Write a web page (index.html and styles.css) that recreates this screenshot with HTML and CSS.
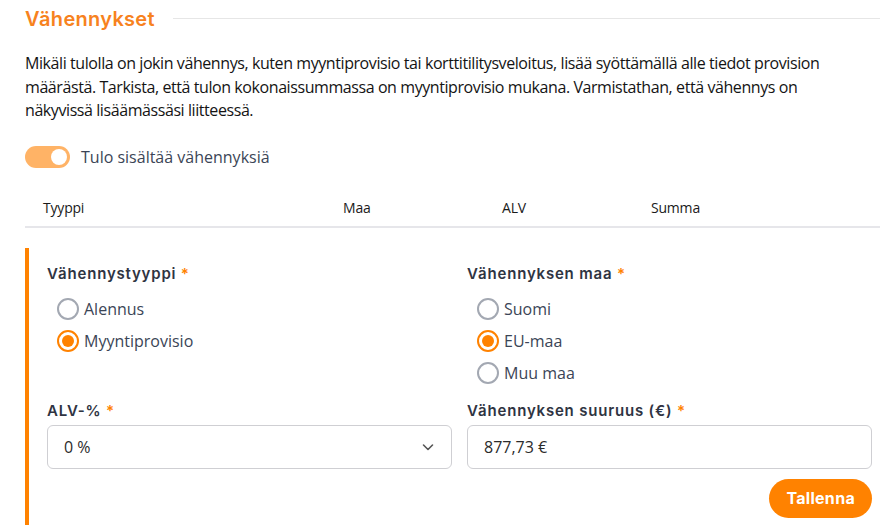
FILE: index.html
```html
<!DOCTYPE html>
<html lang="fi">
<head>
<meta charset="utf-8">
<link rel="stylesheet" href="styles.css">
</head>
<body>
<section class="deductions">
  <div class="title-row">
    <h2 class="title">Vähennykset</h2>
    <div class="title-line"></div>
  </div>
  <p class="intro">Mikäli tulolla on jokin vähennys, kuten myyntiprovisio tai korttitilitysveloitus, lisää syöttämällä alle tiedot provision määrästä. Tarkista, että tulon kokonaissummassa on myyntiprovisio mukana. Varmistathan, että vähennys on näkyvissä lisäämässäsi liitteessä.</p>
  <label class="toggle-row">
    <span class="toggle"><span class="knob"></span></span>
    <span class="toggle-label">Tulo sisältää vähennyksiä</span>
  </label>
  <div class="table-head">
    <span class="col col-type">Tyyppi</span>
    <span class="col col-country">Maa</span>
    <span class="col col-vat">ALV</span>
    <span class="col col-sum">Summa</span>
  </div>
  <div class="panel">
    <div class="grid">
      <div class="field">
        <div class="label">Vähennystyyppi <span class="req">*</span></div>
        <div class="radios">
          <div class="radio"><span class="dot"></span>Alennus</div>
          <div class="radio checked"><span class="dot"></span>Myyntiprovisio</div>
        </div>
      </div>
      <div class="field">
        <div class="label">Vähennyksen maa <span class="req">*</span></div>
        <div class="radios">
          <div class="radio"><span class="dot"></span>Suomi</div>
          <div class="radio checked"><span class="dot"></span>EU-maa</div>
          <div class="radio"><span class="dot"></span>Muu maa</div>
        </div>
      </div>
      <div class="field">
        <div class="label">ALV-% <span class="req">*</span></div>
        <div class="input select">
          <span>0 %</span>
          <svg class="chev" width="14" height="14" viewBox="0 0 14 14"><path d="M2.5 5 L7 9.5 L11.5 5" fill="none" stroke="#555" stroke-width="1.6" stroke-linecap="round" stroke-linejoin="round"/></svg>
        </div>
      </div>
      <div class="field">
        <div class="label">Vähennyksen suuruus (€) <span class="req">*</span></div>
        <div class="input">877,73 €</div>
        <div class="actions"><button class="btn">Tallenna</button></div>
      </div>
    </div>
  </div>
</section>
</body>
</html>
```
FILE: styles.css
```css
html, body {
  margin: 0;
  padding: 0;
  background: #fff;
}
body {
  font-family: "Open Sans", "Liberation Sans", sans-serif;
  color: #1a1a1a;
  width: 880px;
  height: 525px;
  overflow: hidden;
}
.deductions {
  padding-left: 25px;
}
.title-row {
  display: flex;
  align-items: center;
  gap: 18px;
  height: 37px;
}
.title {
  margin: 0;
  font-family: Inter, "Noto Sans", sans-serif;
  font-weight: 600;
  font-size: 20px;
  color: #f7821e;
  letter-spacing: 0.3px;
}
.title-line {
  flex: 1;
  height: 1px;
  background: #e6e6e6;
}
.intro {
  margin: 15px 0 0;
  font-size: 16px;
  line-height: 23.5px;
  letter-spacing: -0.42px;
  padding-right: 20px;
  color: #141414;
}
.toggle-row {
  display: flex;
  align-items: center;
  gap: 11px;
  margin-top: 23px;
  height: 22px;
}
.toggle {
  width: 45px;
  height: 22px;
  border-radius: 11px;
  background: #ffb366;
  position: relative;
}
.knob {
  position: absolute;
  right: 3px;
  top: 3px;
  width: 16px;
  height: 16px;
  border-radius: 50%;
  background: #fff;
}
.toggle-label {
  font-size: 16px;
  color: #3b4556;
}
.table-head {
  display: flex;
  align-items: center;
  height: 36px;
  margin-top: 22px;
  border-bottom: 2px solid #e6e6ea;
  font-size: 14px;
  letter-spacing: -0.2px;
  color: #1a1a1a;
}
.col-type { padding-left: 18px; width: 300px; }
.col-country { width: 159px; }
.col-vat { width: 149px; }
.panel {
  margin-top: 20px;
  border-left: 4px solid #ff8200;
  padding: 16px 8px 10px 18px;
}
.grid {
  display: grid;
  grid-template-columns: 405px 405px;
  column-gap: 15px;
  row-gap: 17px;
}
.label {
  font-family: Inter, "Noto Sans", sans-serif;
  font-weight: 600;
  font-size: 15px;
  color: #2f3442;
  letter-spacing: 0.8px;
  line-height: 20px;
}
.req { color: #ff8200; }
.radios {
  display: flex;
  flex-direction: column;
  gap: 10px;
  margin-top: 14px;
  padding-left: 10px;
}
.radio {
  display: flex;
  align-items: center;
  gap: 5px;
  font-size: 16px;
  color: #3b4556;
  height: 22px;
}
.dot {
  box-sizing: border-box;
  width: 22px;
  height: 22px;
  border-radius: 50%;
  border: 2px solid #a3a8b2;
  position: relative;
}
.radio.checked .dot {
  border-color: #ff8200;
}
.radio.checked .dot::after {
  content: "";
  position: absolute;
  left: 3px;
  top: 3px;
  width: 12px;
  height: 12px;
  border-radius: 50%;
  background: #ff8200;
}
.input {
  box-sizing: border-box;
  margin-top: 4px;
  height: 44px;
  border: 1px solid #cfcfd3;
  border-radius: 6px;
  display: flex;
  align-items: center;
  padding: 0 16px;
  font-size: 16px;
  color: #2b2b2b;
}
.select {
  justify-content: space-between;
}
.actions {
  display: flex;
  justify-content: flex-end;
  margin-top: 10px;
}
.btn {
  font-family: Inter, "Noto Sans", sans-serif;
  font-weight: 700;
  font-size: 16px;
  letter-spacing: 0.3px;
  color: #fff;
  background: #ff8200;
  border: none;
  border-radius: 20px;
  height: 39px;
  padding: 0 17px;
}
```
